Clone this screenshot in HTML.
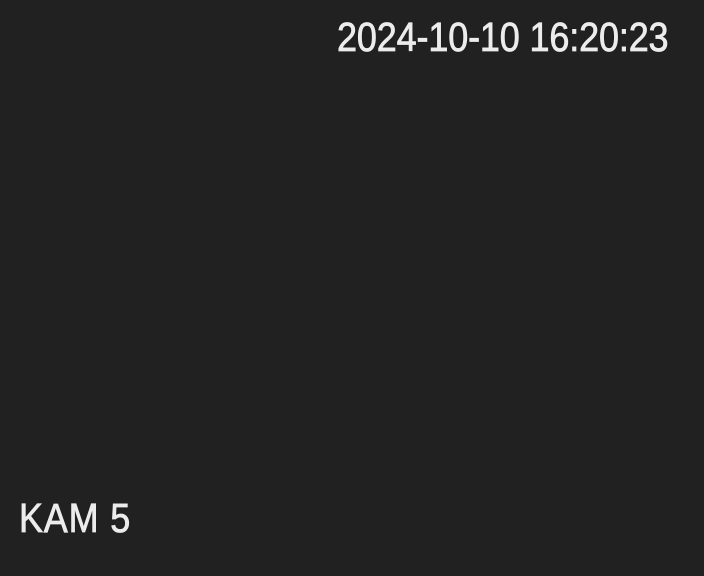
<!DOCTYPE html>
<html><head><style>
html,body{margin:0;padding:0;width:704px;height:576px;background:#212121;overflow:hidden}
.t{position:absolute;font-family:"Liberation Sans",sans-serif;font-size:36px;color:#ececec;line-height:1;white-space:nowrap;transform-origin:left bottom;transform:scaleY(1.13);-webkit-text-stroke:0.7px #ececec;text-shadow:0 0 1px #000}
</style></head><body>
<div class="t" style="left:337px;top:22px;letter-spacing:-0.15px">2024-10-10 16:20:23</div>
<div class="t" style="left:19px;top:503px;letter-spacing:0.8px">KAM 5</div>
</body></html>
